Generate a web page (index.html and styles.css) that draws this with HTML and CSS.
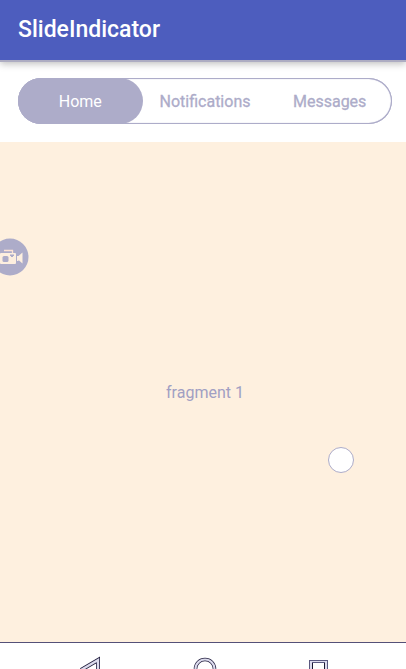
FILE: index.html
```
<!DOCTYPE html>
<html lang="en">
<head>
<meta charset="utf-8">
<meta name="viewport" content="width=device-width, initial-scale=1">
<title>SlideIndicator</title>
<link rel="stylesheet" href="styles.css">
</head>
<body>
<header class="app-bar"><h1 class="app-title">SlideIndicator</h1></header>
<nav class="tabs-wrap">
  <div class="tabs">
    <button class="tab tab-active" type="button">Home</button>
    <button class="tab" type="button">Notifications</button>
    <button class="tab" type="button">Messages</button>
  </div>
</nav>
<main class="page">
  <p class="page-text">fragment 1</p>
  <button class="recorder" type="button" aria-label="Record">
    <svg viewBox="0 0 38 38">
      <circle cx="19" cy="19" r="18.500" fill="#adacc9"/>
      <path d="M13 12.500h8.500v3" fill="none" stroke="#fde3d5" stroke-width="1.300"/>
      <rect x="9" y="15" width="16" height="11" rx="1" fill="#fdefdf"/>
      <path d="M26 18h1.500v5h-1.500zM27.500 18l4-3.500v11l-4-3.500z" fill="#fdefdf"/>
      <rect x="11.500" y="18" width="6" height="6" rx="1.500" fill="#adacc9"/>
      <path d="M19 16.500h4v1.500h-1v1h-2v-1h-1z" fill="#adacc9"/>
    </svg>
  </button>
  <span class="touch"></span>
</main>
<footer class="system-nav">
  <button class="nav-key" type="button" aria-label="Back">
    <svg viewBox="0 0 24 27"><path d="M1 27L18 17V27" fill="none" stroke="#242040" stroke-width="4"/><path d="M1 27L18 17V27" fill="none" stroke="#dcdbed" stroke-width="2.400"/></svg>
  </button>
  <button class="nav-key" type="button" aria-label="Home">
    <svg viewBox="0 0 24 27"><circle cx="12" cy="26" r="9.500" fill="none" stroke="#242040" stroke-width="3.500"/><circle cx="12" cy="26" r="9.500" fill="none" stroke="#dcdbed" stroke-width="2.200"/></svg>
  </button>
  <button class="nav-key" type="button" aria-label="Recent apps">
    <svg viewBox="0 0 24 27" shape-rendering="crispEdges"><path d="M3 27V17H22V27H18V20H7V27z" fill="#5b5980"/><path d="M4 27V18H21V27H19V19H6V27z" fill="#dcdbed"/><path d="M6.500 20V27M18.500 20V27" stroke="#1b1832"/></svg>
  </button>
</footer>
</body>
</html>
```
FILE: styles.css
```
* {
  box-sizing: border-box;
}

body {
  margin: 0;
  min-height: 100vh;
  display: flex;
  flex-direction: column;
  background: #fff;
  font-family: Roboto, sans-serif;
}

button {
  padding: 0;
  border: 0;
  background: none;
  font: inherit;
}

svg {
  display: block;
  width: 100%;
  height: 100%;
}

.app-bar {
  height: 60px;
  padding: 0 18px 2px;
  display: flex;
  align-items: center;
  background: #4d5dbe;
  box-shadow: 0 2px 0 #adacc2, 0 4px 7px rgba(0, 0, 0, 0.25);
}

.app-title {
  margin: 0;
  color: #fff;
  font-size: 23px;
  font-weight: 500;
}

.tabs-wrap {
  padding: 18px 14px 18px 18px;
}

.tabs {
  height: 46px;
  display: grid;
  grid-template-columns: repeat(3, 1fr);
  border-radius: 23px;
  box-shadow: inset 0 0 0 1px #adacc9, inset 0 0 1px 1px #adacc9;
}

.tab {
  border-radius: 23px;
  color: #adacc9;
  font-size: 16px;
  -webkit-text-stroke: 0.3px #adacc9;
}

.tab-active {
  background: #adacc9;
  color: #fff;
  -webkit-text-stroke: 0;
}

.page {
  position: relative;
  flex: 1;
  padding-left: 4px;
  display: flex;
  align-items: center;
  justify-content: center;
  background: #fef0df;
}

.page-text {
  margin: 0;
  color: #a19fc3;
  font-size: 16px;
}

.recorder {
  position: absolute;
  left: -9px;
  top: 96px;
  width: 38px;
  height: 38px;
}

.touch {
  position: absolute;
  right: 52px;
  top: 305px;
  width: 26px;
  height: 26px;
  border: 1px solid #adacc9;
  border-radius: 50%;
  background: #fff;
}

.system-nav {
  height: 27px;
  padding: 0 32px 0 36px;
  display: grid;
  grid-template-columns: repeat(3, 1fr);
  justify-items: center;
  border-top: 1px solid #545078;
  background: #fff;
  overflow: hidden;
}

.nav-key {
  width: 24px;
  height: 27px;
}
```
